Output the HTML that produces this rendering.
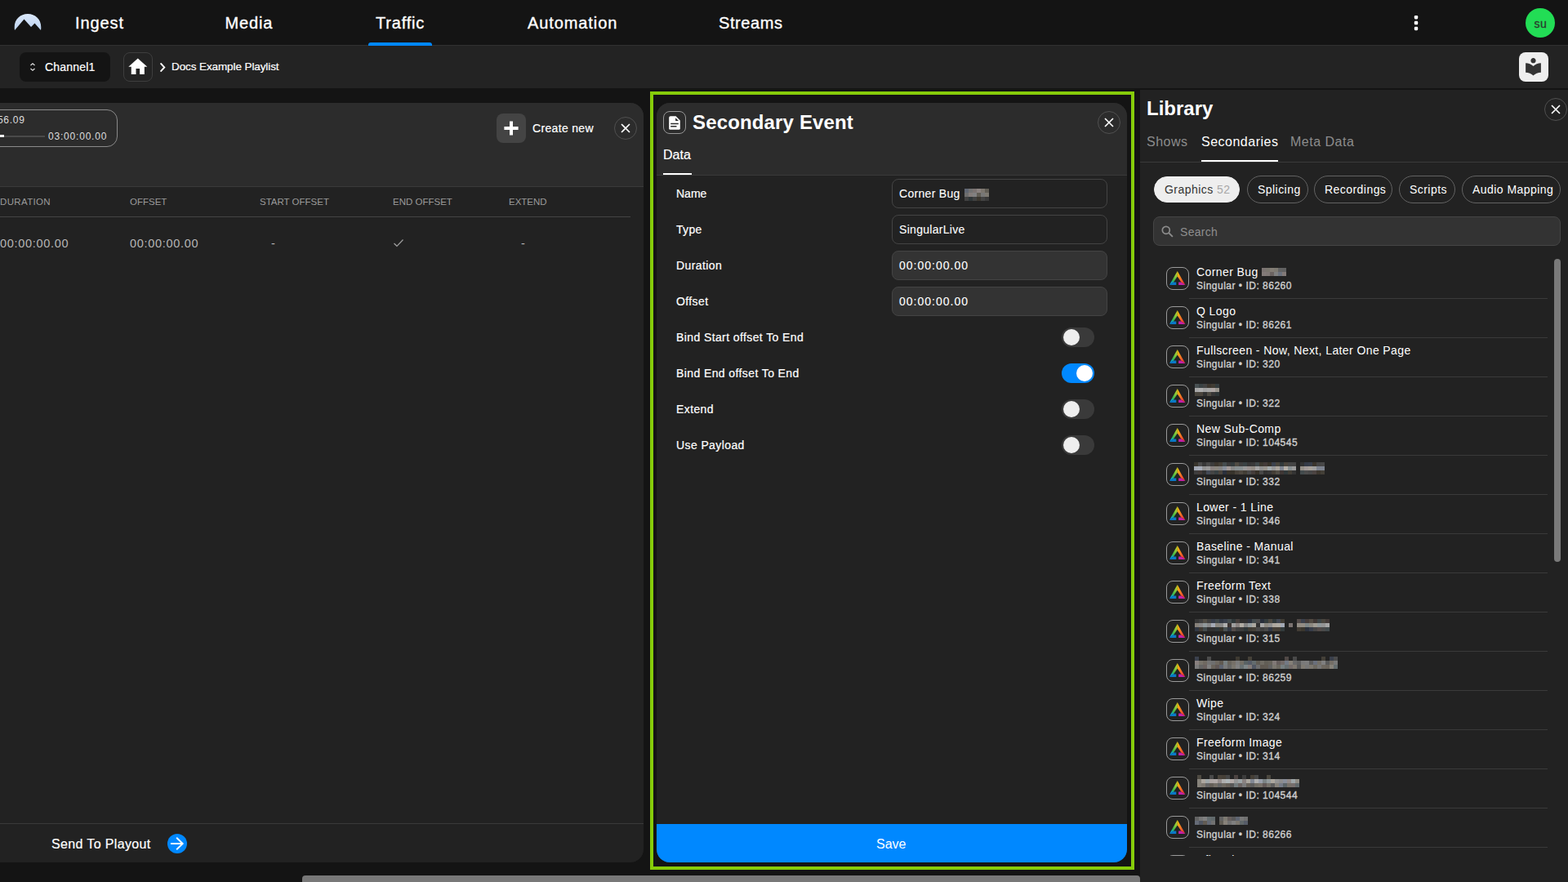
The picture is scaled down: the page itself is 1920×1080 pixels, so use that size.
<!DOCTYPE html>
<html lang="en">
<head>
<meta charset="utf-8">
<title>Docs Example Playlist</title>
<style>
*{box-sizing:border-box;margin:0;padding:0}
html,body{width:1920px;height:1080px;overflow:hidden;background:#141414}
body{font-family:"Liberation Sans",sans-serif;color:#fff;position:relative;font-size:14px}
.abs{position:absolute}
.t{position:absolute;white-space:nowrap;line-height:1}
/* top nav */
#nav{left:0;top:0;width:1920px;height:55px;background:#141414}
#navline{left:0;top:55px;width:1920px;height:1px;background:#313131}
.navi{font-size:20px;top:18px;color:#fff;-webkit-text-stroke:0.35px #fff}
#uline{left:451px;top:52px;width:78px;height:4px;background:#0088ff;border-radius:3px 3px 0 0}
#avatar{left:1868px;top:10px;width:36px;height:36px;border-radius:50%;background:#22dd55}
/* sub bar */
#sub{left:0;top:56px;width:1920px;height:52px;background:#232323}
#chan{left:24px;top:64px;width:111px;height:36px;border-radius:8px;background:#141414}
#home{left:151px;top:64px;width:36px;height:36px;border-radius:8px;border:1px solid #3e3e3e}
#book{left:1860px;top:64px;width:36px;height:36px;border-radius:8px;background:#eeeeee}
/* left panel */
#lp{left:-20px;top:126px;width:808px;height:930px;border-radius:16px;background:#222222;overflow:hidden}
#lphead{left:0;top:0;width:808px;height:102px;background:#2c2c2c}
.hl{position:absolute;height:1px;background:#3a3a3a}
.th{font-size:11.5px;color:#9a9a9a;top:241.7px}
.td{font-size:14.5px;letter-spacing:0.7px;color:#b5b5b5;top:291px}
#pill{left:-20px;top:134px;width:164px;height:46px;border:1px solid #8a8a8a;border-radius:13px}
#plus{left:608px;top:139px;width:36px;height:36px;border-radius:8px;background:#444444}
.xbtn{position:absolute;width:28px;height:28px;border-radius:50%;border:1px solid #505050}
/* secondary event */
#green{left:796px;top:112px;width:593px;height:953px;border:4px solid #86cc0a}
#se{left:804px;top:126px;width:576px;height:930px;border-radius:16px;background:#222222;overflow:hidden}
#sehead{left:0;top:0;width:576px;height:88px;background:#2c2c2c}
.lbl{letter-spacing:0.4px;font-size:14px;color:#fff;left:828px;-webkit-text-stroke:0.2px #fff}
.inp{position:absolute;left:1092px;width:264px;height:36px;border-radius:8px;border:1px solid #444444}
.inp.f{background:#333333}
.inp span{letter-spacing:0.3px;position:absolute;left:8px;top:10px;font-size:14px;line-height:1;white-space:nowrap;-webkit-text-stroke:0.1px #fff}
.tg{position:absolute;left:1300px;width:40px;height:24px;border-radius:12px;background:#3a3a3a}
.tg i{position:absolute;left:2px;top:2px;width:20px;height:20px;border-radius:50%;background:#eeeeee}
.tg.on{background:#0088ff}
.tg.on i{left:18px;background:#fff}
#save{left:804px;top:1009px;width:576px;height:47px;background:#0088ff;border-radius:0 0 16px 16px}
/* library */
#lib{left:1396px;top:110px;width:524px;height:970px;background:#222222}
.tab{font-size:16px;top:166px;letter-spacing:0.5px}
.chip{letter-spacing:0.45px;position:absolute;top:215px;height:34px;border-radius:17px;border:1px solid #626262;font-size:14px;line-height:32px;text-align:left;padding-left:12px;white-space:nowrap;color:#fff}
#search{left:1412px;top:265px;width:499px;height:36px;border-radius:8px;background:#333333;border:1px solid #454545}
#list{left:1396px;top:317px;width:512px;height:731px;overflow:hidden}
.it{position:absolute;left:0;width:512px;height:48px}
.it .ic{position:absolute;left:32px;top:10px;width:28px;height:28px;border-radius:8px;border:1px solid #9a9a9a}
.it .ic svg{position:absolute;left:3.3px;top:4.2px}
.it .a{letter-spacing:0.4px;position:absolute;left:69px;top:9px;font-size:14px;line-height:1;white-space:nowrap;color:#fff}
.it .b{letter-spacing:0.5px;position:absolute;left:69px;top:27px;font-size:12px;line-height:1;white-space:nowrap;color:#d0d0d0;-webkit-text-stroke:0.35px #d0d0d0}
.it .d{position:absolute;left:60px;top:48px;width:439px;height:1px;background:#3a3a3a}
.px{position:absolute;display:block}
#vsb{left:1903px;top:317px;width:8px;height:371px;border-radius:4px;background:#7a7a7a}
#hsb{left:370px;top:1072px;width:1026px;height:8px;border-radius:4px 4px 0 0;background:#787878}
</style>
</head>
<body>
<!-- NAV -->
<div id="nav" class="abs"></div>
<div id="navline" class="abs"></div>
<svg class="abs" style="left:17px;top:16px" width="34" height="22" viewBox="0 0 34 22"><defs><linearGradient id="lg" x1="0" y1="0" x2="0" y2="1"><stop offset="0" stop-color="#dbe8fb"/><stop offset="1" stop-color="#bcd3f0"/></linearGradient></defs><path d="M1 21 C-1 9 7 1 17 1 C27 1 35 9 33 21 L25.5 12.5 L21 17 L12.5 7.5 Z" fill="url(#lg)"/></svg>
<span class="t navi" style="left:92px;letter-spacing:0.9px">Ingest</span>
<span class="t navi" style="left:275.5px;letter-spacing:0.85px">Media</span>
<span class="t navi" style="left:460px;letter-spacing:0.8px">Traffic</span>
<span class="t navi" style="left:646px;letter-spacing:0.9px">Automation</span>
<span class="t navi" style="left:880px;letter-spacing:0.6px">Streams</span>
<div id="uline" class="abs"></div>
<svg class="abs" style="left:1730px;top:18px" width="8" height="20" viewBox="0 0 8 20"><rect x="1.8" y="1" width="4.4" height="4.4" rx="1.3" fill="#fff"/><rect x="1.8" y="7.87" width="4.4" height="4.4" rx="1.3" fill="#fff"/><rect x="1.8" y="14.75" width="4.4" height="4.4" rx="1.3" fill="#fff"/></svg>
<div id="avatar" class="abs"></div>
<span class="t" style="left:1878.5px;top:22px;font-size:14px;letter-spacing:0.5px;color:#2a3a2e;-webkit-text-stroke:0.3px #2a3a2e">su</span>

<!-- SUB BAR -->
<div id="sub" class="abs"></div>
<div id="chan" class="abs"></div>
<svg class="abs" style="left:35px;top:76px" width="10" height="12" viewBox="0 0 10 12"><path d="M2.5 4 L5 1.7 L7.5 4 M2.5 8 L5 10.3 L7.5 8" fill="none" stroke="#ddd" stroke-width="1.2"/></svg>
<span class="t" style="left:55px;top:75px;font-size:14px;letter-spacing:0.2px;-webkit-text-stroke:0.2px #fff">Channel1</span>
<div id="home" class="abs"></div>
<svg class="abs" style="left:155.2px;top:68.15px" width="27.6" height="27.6" viewBox="0 0 24 24"><path d="M10 20v-6h4v6h5v-8h3L12 3 2 12h3v8z" fill="#fff"/></svg>
<svg class="abs" style="left:195px;top:77px" width="8" height="11" viewBox="0 0 8 11"><path d="M1.6 0.4 L6.3 5.5 L1.6 10.6" fill="none" stroke="#fff" stroke-width="1.9" stroke-linejoin="miter"/></svg>
<span class="t" style="left:210px;top:75px;font-size:13.5px;letter-spacing:-0.1px;-webkit-text-stroke:0.2px #fff">Docs Example Playlist</span>
<div id="book" class="abs"></div>
<svg class="abs" style="left:1865px;top:68.9px" width="25" height="25" viewBox="0 0 24 24"><path d="M12 11.55C9.64 9.35 6.48 8 3 8v11c3.48 0 6.64 1.35 9 3.55 2.36-2.19 5.52-3.55 9-3.55V8c-3.48 0-6.64 1.35-9 3.55zM12 8c1.66 0 3-1.34 3-3s-1.34-3-3-3-3 1.34-3 3 1.34 3 3 3z" fill="#333"/></svg>

<!-- LEFT PANEL -->
<div id="lp" class="abs"><div id="lphead" class="abs"></div></div>
<div class="hl" style="left:0;top:228px;width:788px"></div>
<div class="hl" style="left:0;top:265px;width:772px;background:#444"></div>
<div class="hl" style="left:0;top:1008px;width:788px"></div>
<div id="pill" class="abs"></div>
<span class="t" style="left:-3px;top:141px;font-size:12px;letter-spacing:0.7px;color:#ddd">56.09</span>
<div class="abs" style="left:0;top:166px;width:55px;height:2px;background:#4a4a4a"></div>
<div class="abs" style="left:0;top:165px;width:5px;height:3px;background:#eee"></div>
<span class="t" style="left:59px;top:161px;font-size:12px;letter-spacing:0.8px;color:#ddd">03:00:00.00</span>
<div id="plus" class="abs"></div>
<svg class="abs" style="left:616.6px;top:147.5px" width="18" height="18" viewBox="0 0 18 18"><path d="M9 0.4 V17.6 M0.4 9 H17.6" stroke="#fff" stroke-width="4"/></svg>
<span class="t" style="left:652px;top:150px;font-size:14px;letter-spacing:0.33px;-webkit-text-stroke:0.2px #fff">Create new</span>
<div class="xbtn" style="left:752px;top:143px"></div>
<svg class="abs" style="left:760px;top:151px" width="12" height="12" viewBox="0 0 12 12"><path d="M1 1 L11 11 M11 1 L1 11" stroke="#fff" stroke-width="1.6"/></svg>
<span class="t th" style="left:0;letter-spacing:0.35px">DURATION</span>
<span class="t th" style="left:159px">OFFSET</span>
<span class="t th" style="left:318px">START OFFSET</span>
<span class="t th" style="left:481px">END OFFSET</span>
<span class="t th" style="left:623px">EXTEND</span>
<span class="t td" style="left:0">00:00:00.00</span>
<span class="t td" style="left:159px">00:00:00.00</span>
<span class="t td" style="left:332px">-</span>
<svg class="abs" style="left:481px;top:292px" width="14" height="11" viewBox="0 0 14 11"><path d="M1.5 6 L5 9.3 L12.5 1.5" fill="none" stroke="#a0a0a0" stroke-width="1.2"/></svg>
<span class="t td" style="left:638px">-</span>
<span class="t" style="left:63px;top:1026px;font-size:16px;letter-spacing:0.36px;-webkit-text-stroke:0.2px #fff">Send To Playout</span>
<div class="abs" style="left:205px;top:1021px;width:24px;height:24px;border-radius:50%;background:#0088ff"></div>
<svg class="abs" style="left:208px;top:1024px" width="18" height="18" viewBox="0 0 18 18"><path d="M1 9 H15.2 M8.2 1.8 L15.7 9 L8.2 16.2" fill="none" stroke="#fff" stroke-width="1.9"/></svg>

<!-- SECONDARY EVENT -->
<div id="green" class="abs"></div>
<div id="se" class="abs"><div id="sehead" class="abs"></div></div>
<div class="hl" style="left:804px;top:214px;width:576px"></div>
<div class="abs" style="left:812px;top:136px;width:28px;height:28px;border-radius:8px;border:1px solid #969696"></div>
<svg class="abs" style="left:819px;top:141.5px" width="14" height="17" viewBox="0 0 14 17"><path d="M2 0.3 H8.6 L13.8 5.5 V15.2 Q13.8 16.8 12.2 16.8 H1.8 Q0.2 16.8 0.2 15.2 V1.9 Q0.2 0.3 2 0.3 Z" fill="#fff"/><path d="M8.1 2.2 V6.1 H12 Z" fill="#2c2c2c"/><path d="M2.2 9.4 H11.8 M2.2 12.7 H9.5" stroke="#2c2c2c" stroke-width="1.5"/></svg>
<span class="t" style="left:848px;top:138px;font-size:24px;letter-spacing:0.15px;font-weight:bold">Secondary Event</span>
<div class="xbtn" style="left:1344px;top:136px"></div>
<svg class="abs" style="left:1352px;top:144px" width="12" height="12" viewBox="0 0 12 12"><path d="M1 1 L11 11 M11 1 L1 11" stroke="#fff" stroke-width="1.6"/></svg>
<span class="t" style="left:812px;top:182px;font-size:16px;-webkit-text-stroke:0.2px #fff">Data</span>
<div class="abs" style="left:812px;top:212px;width:35px;height:2px;background:#fff"></div>

<span class="t lbl" style="top:230px;letter-spacing:0">Name</span>
<span class="t lbl" style="top:274px;letter-spacing:0.3px">Type</span>
<span class="t lbl" style="top:318px">Duration</span>
<span class="t lbl" style="top:362px">Offset</span>
<span class="t lbl" style="top:406px">Bind Start offset To End</span>
<span class="t lbl" style="top:450px">Bind End offset To End</span>
<span class="t lbl" style="top:494px">Extend</span>
<span class="t lbl" style="top:538px">Use Payload</span>
<div class="inp" style="top:219px"><span>Corner Bug</span></div>
<!--INM--><svg class="px inm" style="left:1181px;top:231px" width="30" height="15" viewBox="0 0 30 15"><rect x="0" y="0" width="5" height="5" fill="#606672"/><rect x="0" y="5" width="5" height="5" fill="#6d6d6d"/><rect x="0" y="10" width="5" height="5" fill="#414141"/><rect x="5" y="0" width="5" height="5" fill="#727272"/><rect x="5" y="5" width="5" height="5" fill="#847c7a"/><rect x="5" y="10" width="5" height="5" fill="#2f3739"/><rect x="10" y="0" width="5" height="5" fill="#7c7472"/><rect x="10" y="5" width="5" height="5" fill="#818181"/><rect x="10" y="10" width="5" height="5" fill="#414141"/><rect x="15" y="0" width="5" height="5" fill="#8a8280"/><rect x="15" y="5" width="5" height="5" fill="#605c54"/><rect x="15" y="10" width="5" height="5" fill="#3b372f"/><rect x="20" y="0" width="5" height="5" fill="#7c766e"/><rect x="20" y="5" width="5" height="5" fill="#777777"/><rect x="20" y="10" width="5" height="5" fill="#434343"/><rect x="25" y="0" width="5" height="5" fill="#615d55"/><rect x="25" y="5" width="5" height="5" fill="#7d7971"/><rect x="25" y="10" width="5" height="5" fill="#393939"/></svg><!--/INM-->
<div class="inp" style="top:263px"><span>SingularLive</span></div>
<div class="inp f" style="top:307px"><span style="letter-spacing:1px">00:00:00.00</span></div>
<div class="inp f" style="top:351px"><span style="letter-spacing:1px">00:00:00.00</span></div>
<div class="tg" style="top:401px"><i></i></div>
<div class="tg on" style="top:445px"><i></i></div>
<div class="tg" style="top:489px"><i></i></div>
<div class="tg" style="top:533px"><i></i></div>
<div id="save" class="abs"></div>
<span class="t" style="left:1073px;top:1026px;font-size:16px">Save</span>

<!-- LIBRARY -->
<div id="lib" class="abs"></div>
<span class="t" style="left:1404px;top:121.3px;font-size:24px;font-weight:bold">Library</span>
<div class="xbtn" style="left:1891px;top:120px"></div>
<svg class="abs" style="left:1899px;top:128px" width="12" height="12" viewBox="0 0 12 12"><path d="M1 1 L11 11 M11 1 L1 11" stroke="#fff" stroke-width="1.6"/></svg>
<span class="t tab" style="left:1404px;color:#8c8c8c">Shows</span>
<span class="t tab" style="left:1471px">Secondaries</span>
<span class="t tab" style="left:1580px;color:#8c8c8c">Meta Data</span>
<div class="hl" style="left:1396px;top:198px;width:524px"></div>
<div class="abs" style="left:1471px;top:196px;width:94px;height:2px;background:#fff"></div>
<div class="chip" style="left:1413px;top:216px;height:32px;line-height:30px;width:105px;background:#eeeeee;border-color:#eeeeee;color:#333">Graphics <span style="color:#a8a8a8;-webkit-text-stroke:0">52</span></div>
<div class="chip" style="left:1527px;width:75px">Splicing</div>
<div class="chip" style="left:1609px;width:96px">Recordings</div>
<div class="chip" style="left:1713px;width:69px">Scripts</div>
<div class="chip" style="left:1790px;width:121px">Audio Mapping</div>
<div id="search" class="abs"></div>
<svg class="abs" style="left:1421.6px;top:275.6px" width="15" height="15" viewBox="0 0 15 15"><circle cx="5.8" cy="5.8" r="4.5" fill="none" stroke="#8c8c8c" stroke-width="1.7"/><path d="M9.1 9.1 L13.9 13.9" stroke="#8c8c8c" stroke-width="1.9"/></svg>
<span class="t" style="left:1445px;top:276.5px;font-size:14px;letter-spacing:0.3px;color:#8e8e8e">Search</span>
<div id="list" class="abs">
<!--ITEMS-->
<svg width="0" height="0" style="position:absolute"><defs><linearGradient id="gl" x1="0" y1="1" x2="0.35" y2="0"><stop offset="0" stop-color="#00a2e8"/><stop offset="0.2" stop-color="#00a2e8"/><stop offset="0.45" stop-color="#3cb64a"/><stop offset="1" stop-color="#b9d531"/></linearGradient><linearGradient id="gr" x1="0" y1="0" x2="0.35" y2="1"><stop offset="0" stop-color="#ffd400"/><stop offset="0.45" stop-color="#f7931e"/><stop offset="1" stop-color="#ef3b2d"/></linearGradient></defs></svg>
<div class="it" style="top:0px"><div class="ic"><svg width="19.4" height="17" viewBox="0 0 20 17.5"><path d="M10 0 L0 17.5 L5.2 14 L10 6.6 Z" fill="url(#gl)"/><path d="M10 0 L20 17.5 L14.8 14 L10 6.6 Z" fill="url(#gr)"/><path d="M0 17.5 H8.5 V14 H5.2 Z" fill="#0a78c8"/><path d="M20 17.5 H11.5 V14 H14.8 Z" fill="#c420a8"/></svg></div><span class="a">Corner Bug</span><svg class="px" style="left:149px;top:6px" width="30" height="15" viewBox="0 0 30 15"><rect x="0" y="5" width="5" height="5" fill="#7c7472"/><rect x="0" y="10" width="5" height="5" fill="#837b79"/><rect x="5" y="5" width="5" height="5" fill="#7b776f"/><rect x="5" y="10" width="5" height="5" fill="#807876"/><rect x="10" y="5" width="5" height="5" fill="#837d75"/><rect x="10" y="10" width="5" height="5" fill="#6b6361"/><rect x="15" y="5" width="5" height="5" fill="#7e7a72"/><rect x="15" y="10" width="5" height="5" fill="#808080"/><rect x="20" y="5" width="5" height="5" fill="#636363"/><rect x="20" y="10" width="5" height="5" fill="#6c727e"/><rect x="25" y="5" width="5" height="5" fill="#616161"/><rect x="25" y="10" width="5" height="5" fill="#827a78"/></svg><span class="b">Singular &bull; ID: 86260</span><div class="d"></div></div>
<div class="it" style="top:48px"><div class="ic"><svg width="19.4" height="17" viewBox="0 0 20 17.5"><path d="M10 0 L0 17.5 L5.2 14 L10 6.6 Z" fill="url(#gl)"/><path d="M10 0 L20 17.5 L14.8 14 L10 6.6 Z" fill="url(#gr)"/><path d="M0 17.5 H8.5 V14 H5.2 Z" fill="#0a78c8"/><path d="M20 17.5 H11.5 V14 H14.8 Z" fill="#c420a8"/></svg></div><span class="a">Q Logo</span><span class="b">Singular &bull; ID: 86261</span><div class="d"></div></div>
<div class="it" style="top:96px"><div class="ic"><svg width="19.4" height="17" viewBox="0 0 20 17.5"><path d="M10 0 L0 17.5 L5.2 14 L10 6.6 Z" fill="url(#gl)"/><path d="M10 0 L20 17.5 L14.8 14 L10 6.6 Z" fill="url(#gr)"/><path d="M0 17.5 H8.5 V14 H5.2 Z" fill="#0a78c8"/><path d="M20 17.5 H11.5 V14 H14.8 Z" fill="#c420a8"/></svg></div><span class="a">Fullscreen - Now, Next, Later One Page</span><span class="b">Singular &bull; ID: 320</span><div class="d"></div></div>
<div class="it" style="top:144px"><div class="ic"><svg width="19.4" height="17" viewBox="0 0 20 17.5"><path d="M10 0 L0 17.5 L5.2 14 L10 6.6 Z" fill="url(#gl)"/><path d="M10 0 L20 17.5 L14.8 14 L10 6.6 Z" fill="url(#gr)"/><path d="M0 17.5 H8.5 V14 H5.2 Z" fill="#0a78c8"/><path d="M20 17.5 H11.5 V14 H14.8 Z" fill="#c420a8"/></svg></div><svg class="px" style="left:67px;top:9px" width="30" height="15" viewBox="0 0 30 15"><rect x="0" y="0" width="5" height="5" fill="#485052"/><rect x="0" y="5" width="5" height="5" fill="#a8a8a8"/><rect x="0" y="10" width="5" height="5" fill="#49453d"/><rect x="5" y="0" width="5" height="5" fill="#3a4244"/><rect x="5" y="5" width="5" height="5" fill="#afafaf"/><rect x="5" y="10" width="5" height="5" fill="#4a443c"/><rect x="10" y="0" width="5" height="5" fill="#434343"/><rect x="10" y="5" width="5" height="5" fill="#a1a1a1"/><rect x="10" y="10" width="5" height="5" fill="#313131"/><rect x="15" y="0" width="5" height="5" fill="#3c362e"/><rect x="15" y="5" width="5" height="5" fill="#a6a6a6"/><rect x="15" y="10" width="5" height="5" fill="#4e4a42"/><rect x="20" y="0" width="5" height="5" fill="#403c34"/><rect x="20" y="5" width="5" height="5" fill="#ada5a3"/><rect x="20" y="10" width="5" height="5" fill="#363636"/><rect x="25" y="0" width="5" height="5" fill="#333b3d"/><rect x="25" y="5" width="5" height="5" fill="#98948c"/><rect x="25" y="10" width="5" height="5" fill="#2c3436"/></svg><span class="b">Singular &bull; ID: 322</span><div class="d"></div></div>
<div class="it" style="top:192px"><div class="ic"><svg width="19.4" height="17" viewBox="0 0 20 17.5"><path d="M10 0 L0 17.5 L5.2 14 L10 6.6 Z" fill="url(#gl)"/><path d="M10 0 L20 17.5 L14.8 14 L10 6.6 Z" fill="url(#gr)"/><path d="M0 17.5 H8.5 V14 H5.2 Z" fill="#0a78c8"/><path d="M20 17.5 H11.5 V14 H14.8 Z" fill="#c420a8"/></svg></div><span class="a">New Sub-Comp</span><span class="b">Singular &bull; ID: 104545</span><div class="d"></div></div>
<div class="it" style="top:240px"><div class="ic"><svg width="19.4" height="17" viewBox="0 0 20 17.5"><path d="M10 0 L0 17.5 L5.2 14 L10 6.6 Z" fill="url(#gl)"/><path d="M10 0 L20 17.5 L14.8 14 L10 6.6 Z" fill="url(#gr)"/><path d="M0 17.5 H8.5 V14 H5.2 Z" fill="#0a78c8"/><path d="M20 17.5 H11.5 V14 H14.8 Z" fill="#c420a8"/></svg></div><svg class="px" style="left:66px;top:9px" width="160" height="15" viewBox="0 0 160 15"><rect x="0" y="0" width="5" height="5" fill="#38342c"/><rect x="0" y="5" width="5" height="5" fill="#a1a7b3"/><rect x="0" y="10" width="5" height="5" fill="#3d3d3d"/><rect x="5" y="0" width="5" height="5" fill="#4a4a4a"/><rect x="5" y="5" width="5" height="5" fill="#a5abb7"/><rect x="5" y="10" width="5" height="5" fill="#423a38"/><rect x="10" y="0" width="5" height="5" fill="#373737"/><rect x="10" y="5" width="5" height="5" fill="#929292"/><rect x="10" y="10" width="5" height="5" fill="#323232"/><rect x="15" y="0" width="5" height="5" fill="#484848"/><rect x="15" y="5" width="5" height="5" fill="#999999"/><rect x="15" y="10" width="5" height="5" fill="#434955"/><rect x="20" y="0" width="5" height="5" fill="#3c3c3c"/><rect x="20" y="5" width="5" height="5" fill="#89817f"/><rect x="20" y="10" width="5" height="5" fill="#454545"/><rect x="25" y="0" width="5" height="5" fill="#3c362e"/><rect x="25" y="5" width="5" height="5" fill="#89857d"/><rect x="25" y="10" width="5" height="5" fill="#384042"/><rect x="30" y="0" width="5" height="5" fill="#423e36"/><rect x="30" y="5" width="5" height="5" fill="#848484"/><rect x="30" y="10" width="5" height="5" fill="#4a443c"/><rect x="35" y="0" width="5" height="5" fill="#444c4e"/><rect x="35" y="5" width="5" height="5" fill="#898f9b"/><rect x="35" y="10" width="5" height="5" fill="#2a303c"/><rect x="40" y="0" width="5" height="5" fill="#3a3a3a"/><rect x="40" y="5" width="5" height="5" fill="#a29a98"/><rect x="40" y="10" width="5" height="5" fill="#39332b"/><rect x="45" y="0" width="5" height="5" fill="#333b3d"/><rect x="45" y="5" width="5" height="5" fill="#868686"/><rect x="45" y="10" width="5" height="5" fill="#37332b"/><rect x="50" y="0" width="5" height="5" fill="#4f4b43"/><rect x="50" y="5" width="5" height="5" fill="#878f91"/><rect x="50" y="10" width="5" height="5" fill="#474139"/><rect x="55" y="0" width="5" height="5" fill="#3e3e3e"/><rect x="55" y="5" width="5" height="5" fill="#889092"/><rect x="55" y="10" width="5" height="5" fill="#4e4840"/><rect x="60" y="0" width="5" height="5" fill="#394143"/><rect x="60" y="5" width="5" height="5" fill="#989898"/><rect x="60" y="10" width="5" height="5" fill="#423e36"/><rect x="65" y="0" width="5" height="5" fill="#363636"/><rect x="65" y="5" width="5" height="5" fill="#99918f"/><rect x="65" y="10" width="5" height="5" fill="#494949"/><rect x="70" y="0" width="5" height="5" fill="#393939"/><rect x="70" y="5" width="5" height="5" fill="#938d85"/><rect x="70" y="10" width="5" height="5" fill="#443c3a"/><rect x="75" y="0" width="5" height="5" fill="#3f4749"/><rect x="75" y="5" width="5" height="5" fill="#a4a4a4"/><rect x="75" y="10" width="5" height="5" fill="#373129"/><rect x="80" y="0" width="5" height="5" fill="#3c3830"/><rect x="80" y="5" width="5" height="5" fill="#909090"/><rect x="80" y="10" width="5" height="5" fill="#484848"/><rect x="85" y="0" width="5" height="5" fill="#423a38"/><rect x="85" y="5" width="5" height="5" fill="#98948c"/><rect x="85" y="10" width="5" height="5" fill="#323232"/><rect x="90" y="0" width="5" height="5" fill="#38322a"/><rect x="90" y="5" width="5" height="5" fill="#a1a9ab"/><rect x="90" y="10" width="5" height="5" fill="#373737"/><rect x="95" y="0" width="5" height="5" fill="#3b414d"/><rect x="95" y="5" width="5" height="5" fill="#979797"/><rect x="95" y="10" width="5" height="5" fill="#443e36"/><rect x="100" y="0" width="5" height="5" fill="#48443c"/><rect x="100" y="5" width="5" height="5" fill="#aaa49c"/><rect x="100" y="10" width="5" height="5" fill="#514d45"/><rect x="105" y="0" width="5" height="5" fill="#31393b"/><rect x="105" y="5" width="5" height="5" fill="#818793"/><rect x="105" y="10" width="5" height="5" fill="#3f3735"/><rect x="110" y="0" width="5" height="5" fill="#49433b"/><rect x="110" y="5" width="5" height="5" fill="#b4aea6"/><rect x="110" y="10" width="5" height="5" fill="#31393b"/><rect x="115" y="0" width="5" height="5" fill="#444444"/><rect x="115" y="5" width="5" height="5" fill="#889092"/><rect x="115" y="10" width="5" height="5" fill="#423e36"/><rect x="120" y="0" width="5" height="5" fill="#434343"/><rect x="120" y="5" width="5" height="5" fill="#9a9a9a"/><rect x="120" y="10" width="5" height="5" fill="#333333"/><rect x="130" y="0" width="5" height="5" fill="#313131"/><rect x="130" y="5" width="5" height="5" fill="#969088"/><rect x="130" y="10" width="5" height="5" fill="#434b4d"/><rect x="135" y="0" width="5" height="5" fill="#343a46"/><rect x="135" y="5" width="5" height="5" fill="#a29a98"/><rect x="135" y="10" width="5" height="5" fill="#4c4c4c"/><rect x="140" y="0" width="5" height="5" fill="#373d49"/><rect x="140" y="5" width="5" height="5" fill="#a7a199"/><rect x="140" y="10" width="5" height="5" fill="#474747"/><rect x="145" y="0" width="5" height="5" fill="#3a342c"/><rect x="145" y="5" width="5" height="5" fill="#9e9e9e"/><rect x="145" y="10" width="5" height="5" fill="#4c4442"/><rect x="150" y="0" width="5" height="5" fill="#434343"/><rect x="150" y="5" width="5" height="5" fill="#7c828e"/><rect x="150" y="10" width="5" height="5" fill="#3c362e"/><rect x="155" y="0" width="5" height="5" fill="#474747"/><rect x="155" y="5" width="5" height="5" fill="#7c828e"/><rect x="155" y="10" width="5" height="5" fill="#433f37"/></svg><span class="b">Singular &bull; ID: 332</span><div class="d"></div></div>
<div class="it" style="top:288px"><div class="ic"><svg width="19.4" height="17" viewBox="0 0 20 17.5"><path d="M10 0 L0 17.5 L5.2 14 L10 6.6 Z" fill="url(#gl)"/><path d="M10 0 L20 17.5 L14.8 14 L10 6.6 Z" fill="url(#gr)"/><path d="M0 17.5 H8.5 V14 H5.2 Z" fill="#0a78c8"/><path d="M20 17.5 H11.5 V14 H14.8 Z" fill="#c420a8"/></svg></div><span class="a">Lower - 1 Line</span><span class="b">Singular &bull; ID: 346</span><div class="d"></div></div>
<div class="it" style="top:336px"><div class="ic"><svg width="19.4" height="17" viewBox="0 0 20 17.5"><path d="M10 0 L0 17.5 L5.2 14 L10 6.6 Z" fill="url(#gl)"/><path d="M10 0 L20 17.5 L14.8 14 L10 6.6 Z" fill="url(#gr)"/><path d="M0 17.5 H8.5 V14 H5.2 Z" fill="#0a78c8"/><path d="M20 17.5 H11.5 V14 H14.8 Z" fill="#c420a8"/></svg></div><span class="a">Baseline - Manual</span><span class="b">Singular &bull; ID: 341</span><div class="d"></div></div>
<div class="it" style="top:384px"><div class="ic"><svg width="19.4" height="17" viewBox="0 0 20 17.5"><path d="M10 0 L0 17.5 L5.2 14 L10 6.6 Z" fill="url(#gl)"/><path d="M10 0 L20 17.5 L14.8 14 L10 6.6 Z" fill="url(#gr)"/><path d="M0 17.5 H8.5 V14 H5.2 Z" fill="#0a78c8"/><path d="M20 17.5 H11.5 V14 H14.8 Z" fill="#c420a8"/></svg></div><span class="a">Freeform Text</span><span class="b">Singular &bull; ID: 338</span><div class="d"></div></div>
<div class="it" style="top:432px"><div class="ic"><svg width="19.4" height="17" viewBox="0 0 20 17.5"><path d="M10 0 L0 17.5 L5.2 14 L10 6.6 Z" fill="url(#gl)"/><path d="M10 0 L20 17.5 L14.8 14 L10 6.6 Z" fill="url(#gr)"/><path d="M0 17.5 H8.5 V14 H5.2 Z" fill="#0a78c8"/><path d="M20 17.5 H11.5 V14 H14.8 Z" fill="#c420a8"/></svg></div><svg class="px" style="left:67px;top:9px" width="165" height="15" viewBox="0 0 165 15"><rect x="0" y="0" width="5" height="5" fill="#373737"/><rect x="0" y="5" width="5" height="5" fill="#88827a"/><rect x="0" y="10" width="5" height="5" fill="#313743"/><rect x="5" y="0" width="5" height="5" fill="#404040"/><rect x="5" y="5" width="5" height="5" fill="#888888"/><rect x="5" y="10" width="5" height="5" fill="#413b33"/><rect x="10" y="0" width="5" height="5" fill="#524e46"/><rect x="10" y="5" width="5" height="5" fill="#91999b"/><rect x="10" y="10" width="5" height="5" fill="#434b4d"/><rect x="15" y="0" width="5" height="5" fill="#404040"/><rect x="15" y="5" width="5" height="5" fill="#888888"/><rect x="15" y="10" width="5" height="5" fill="#313131"/><rect x="20" y="0" width="5" height="5" fill="#373d49"/><rect x="20" y="5" width="5" height="5" fill="#a4aab6"/><rect x="20" y="10" width="5" height="5" fill="#313131"/><rect x="25" y="0" width="5" height="5" fill="#3f4749"/><rect x="25" y="5" width="5" height="5" fill="#8a867e"/><rect x="25" y="10" width="5" height="5" fill="#2e3638"/><rect x="30" y="0" width="5" height="5" fill="#313743"/><rect x="30" y="5" width="5" height="5" fill="#888888"/><rect x="30" y="10" width="5" height="5" fill="#38342c"/><rect x="35" y="0" width="5" height="5" fill="#393f4b"/><rect x="35" y="5" width="5" height="5" fill="#afafaf"/><rect x="35" y="10" width="5" height="5" fill="#485052"/><rect x="40" y="0" width="5" height="5" fill="#434b4d"/><rect x="40" y="5" width="5" height="5" fill="#3c3432"/><rect x="40" y="10" width="5" height="5" fill="#323844"/><rect x="45" y="0" width="5" height="5" fill="#2e3638"/><rect x="45" y="5" width="5" height="5" fill="#9e9e9e"/><rect x="45" y="10" width="5" height="5" fill="#534b49"/><rect x="50" y="0" width="5" height="5" fill="#453d3b"/><rect x="50" y="5" width="5" height="5" fill="#89817f"/><rect x="50" y="10" width="5" height="5" fill="#3f3f3f"/><rect x="55" y="0" width="5" height="5" fill="#303030"/><rect x="55" y="5" width="5" height="5" fill="#b0aca4"/><rect x="55" y="10" width="5" height="5" fill="#3c3c3c"/><rect x="60" y="0" width="5" height="5" fill="#303030"/><rect x="60" y="5" width="5" height="5" fill="#848484"/><rect x="60" y="10" width="5" height="5" fill="#2e3638"/><rect x="65" y="0" width="5" height="5" fill="#2b313d"/><rect x="65" y="5" width="5" height="5" fill="#969ea0"/><rect x="65" y="10" width="5" height="5" fill="#403c34"/><rect x="70" y="0" width="5" height="5" fill="#434b4d"/><rect x="70" y="5" width="5" height="5" fill="#aba79f"/><rect x="70" y="10" width="5" height="5" fill="#444038"/><rect x="75" y="0" width="5" height="5" fill="#4a4a4a"/><rect x="75" y="5" width="5" height="5" fill="#323232"/><rect x="75" y="10" width="5" height="5" fill="#484848"/><rect x="80" y="0" width="5" height="5" fill="#282e3a"/><rect x="80" y="5" width="5" height="5" fill="#a6a6a6"/><rect x="80" y="10" width="5" height="5" fill="#3f3f3f"/><rect x="85" y="0" width="5" height="5" fill="#333b3d"/><rect x="85" y="5" width="5" height="5" fill="#8d8981"/><rect x="85" y="10" width="5" height="5" fill="#484848"/><rect x="90" y="0" width="5" height="5" fill="#4b473f"/><rect x="90" y="5" width="5" height="5" fill="#909090"/><rect x="90" y="10" width="5" height="5" fill="#333945"/><rect x="95" y="0" width="5" height="5" fill="#30383a"/><rect x="95" y="5" width="5" height="5" fill="#ada79f"/><rect x="95" y="10" width="5" height="5" fill="#464038"/><rect x="100" y="0" width="5" height="5" fill="#404652"/><rect x="100" y="5" width="5" height="5" fill="#b0aca4"/><rect x="100" y="10" width="5" height="5" fill="#453f37"/><rect x="105" y="0" width="5" height="5" fill="#403c34"/><rect x="105" y="5" width="5" height="5" fill="#a2a8b4"/><rect x="105" y="10" width="5" height="5" fill="#323a3c"/><rect x="115" y="5" width="5" height="5" fill="#7b7371"/><rect x="125" y="0" width="5" height="5" fill="#514947"/><rect x="125" y="5" width="5" height="5" fill="#928c84"/><rect x="125" y="10" width="5" height="5" fill="#423c34"/><rect x="130" y="0" width="5" height="5" fill="#3a404c"/><rect x="130" y="5" width="5" height="5" fill="#938d85"/><rect x="130" y="10" width="5" height="5" fill="#3a362e"/><rect x="135" y="0" width="5" height="5" fill="#433b39"/><rect x="135" y="5" width="5" height="5" fill="#7e8688"/><rect x="135" y="10" width="5" height="5" fill="#2a303c"/><rect x="140" y="0" width="5" height="5" fill="#504a42"/><rect x="140" y="5" width="5" height="5" fill="#8d8981"/><rect x="140" y="10" width="5" height="5" fill="#373d49"/><rect x="145" y="0" width="5" height="5" fill="#3e3634"/><rect x="145" y="5" width="5" height="5" fill="#a09c94"/><rect x="145" y="10" width="5" height="5" fill="#444444"/><rect x="150" y="0" width="5" height="5" fill="#3b4345"/><rect x="150" y="5" width="5" height="5" fill="#90989a"/><rect x="150" y="10" width="5" height="5" fill="#524a48"/><rect x="155" y="0" width="5" height="5" fill="#49453d"/><rect x="155" y="5" width="5" height="5" fill="#949494"/><rect x="155" y="10" width="5" height="5" fill="#4a4a4a"/><rect x="160" y="0" width="5" height="5" fill="#403836"/><rect x="160" y="5" width="5" height="5" fill="#a6a6a6"/><rect x="160" y="10" width="5" height="5" fill="#41494b"/></svg><span class="b">Singular &bull; ID: 315</span><div class="d"></div></div>
<div class="it" style="top:480px"><div class="ic"><svg width="19.4" height="17" viewBox="0 0 20 17.5"><path d="M10 0 L0 17.5 L5.2 14 L10 6.6 Z" fill="url(#gl)"/><path d="M10 0 L20 17.5 L14.8 14 L10 6.6 Z" fill="url(#gr)"/><path d="M0 17.5 H8.5 V14 H5.2 Z" fill="#0a78c8"/><path d="M20 17.5 H11.5 V14 H14.8 Z" fill="#c420a8"/></svg></div><svg class="px" style="left:67px;top:7px" width="175" height="15" viewBox="0 0 175 15"><rect x="0" y="0" width="5" height="5" fill="#3b414d"/><rect x="0" y="5" width="5" height="5" fill="#89817f"/><rect x="0" y="10" width="5" height="5" fill="#7c7c7c"/><rect x="5" y="5" width="5" height="5" fill="#77736b"/><rect x="5" y="10" width="5" height="5" fill="#646464"/><rect x="10" y="5" width="5" height="5" fill="#6f6961"/><rect x="10" y="10" width="5" height="5" fill="#69615f"/><rect x="15" y="0" width="5" height="5" fill="#4c4c4c"/><rect x="15" y="5" width="5" height="5" fill="#747474"/><rect x="15" y="10" width="5" height="5" fill="#808080"/><rect x="20" y="5" width="5" height="5" fill="#6f6f6f"/><rect x="20" y="10" width="5" height="5" fill="#6a645c"/><rect x="25" y="5" width="5" height="5" fill="#6e6860"/><rect x="25" y="10" width="5" height="5" fill="#605856"/><rect x="30" y="5" width="5" height="5" fill="#605a52"/><rect x="30" y="10" width="5" height="5" fill="#5e6470"/><rect x="35" y="5" width="5" height="5" fill="#767e80"/><rect x="35" y="10" width="5" height="5" fill="#797979"/><rect x="40" y="5" width="5" height="5" fill="#68645c"/><rect x="40" y="10" width="5" height="5" fill="#666666"/><rect x="45" y="5" width="5" height="5" fill="#767068"/><rect x="45" y="10" width="5" height="5" fill="#7a766e"/><rect x="50" y="0" width="5" height="5" fill="#3e3a32"/><rect x="50" y="5" width="5" height="5" fill="#7b7b7b"/><rect x="50" y="10" width="5" height="5" fill="#818181"/><rect x="55" y="5" width="5" height="5" fill="#736f67"/><rect x="55" y="10" width="5" height="5" fill="#687072"/><rect x="60" y="5" width="5" height="5" fill="#5a6264"/><rect x="60" y="10" width="5" height="5" fill="#7d8587"/><rect x="65" y="0" width="5" height="5" fill="#454139"/><rect x="65" y="5" width="5" height="5" fill="#555b67"/><rect x="65" y="10" width="5" height="5" fill="#827a78"/><rect x="70" y="5" width="5" height="5" fill="#646c6e"/><rect x="70" y="10" width="5" height="5" fill="#515763"/><rect x="75" y="5" width="5" height="5" fill="#605c54"/><rect x="75" y="10" width="5" height="5" fill="#6d6d6d"/><rect x="80" y="5" width="5" height="5" fill="#6f6b63"/><rect x="80" y="10" width="5" height="5" fill="#5f5951"/><rect x="85" y="5" width="5" height="5" fill="#625e56"/><rect x="85" y="10" width="5" height="5" fill="#605a52"/><rect x="90" y="5" width="5" height="5" fill="#66625a"/><rect x="90" y="10" width="5" height="5" fill="#616161"/><rect x="95" y="5" width="5" height="5" fill="#817977"/><rect x="95" y="10" width="5" height="5" fill="#7a766e"/><rect x="100" y="5" width="5" height="5" fill="#655d5b"/><rect x="100" y="10" width="5" height="5" fill="#6c6860"/><rect x="105" y="5" width="5" height="5" fill="#726a68"/><rect x="105" y="10" width="5" height="5" fill="#777f81"/><rect x="110" y="0" width="5" height="5" fill="#504846"/><rect x="110" y="5" width="5" height="5" fill="#737985"/><rect x="110" y="10" width="5" height="5" fill="#676f71"/><rect x="115" y="5" width="5" height="5" fill="#857f77"/><rect x="115" y="10" width="5" height="5" fill="#736b69"/><rect x="120" y="0" width="5" height="5" fill="#494949"/><rect x="120" y="5" width="5" height="5" fill="#696969"/><rect x="120" y="10" width="5" height="5" fill="#7d776f"/><rect x="125" y="5" width="5" height="5" fill="#5f5f5f"/><rect x="125" y="10" width="5" height="5" fill="#585858"/><rect x="130" y="5" width="5" height="5" fill="#7a7a7a"/><rect x="130" y="10" width="5" height="5" fill="#7f7b73"/><rect x="135" y="5" width="5" height="5" fill="#7c7c7c"/><rect x="135" y="10" width="5" height="5" fill="#777777"/><rect x="140" y="5" width="5" height="5" fill="#5c5c5c"/><rect x="140" y="10" width="5" height="5" fill="#7b776f"/><rect x="145" y="5" width="5" height="5" fill="#696f7b"/><rect x="145" y="10" width="5" height="5" fill="#6d6961"/><rect x="150" y="5" width="5" height="5" fill="#736f67"/><rect x="150" y="10" width="5" height="5" fill="#767676"/><rect x="155" y="0" width="5" height="5" fill="#444038"/><rect x="155" y="5" width="5" height="5" fill="#7f7f7f"/><rect x="155" y="10" width="5" height="5" fill="#6e6860"/><rect x="160" y="5" width="5" height="5" fill="#595959"/><rect x="160" y="10" width="5" height="5" fill="#6a645c"/><rect x="165" y="0" width="5" height="5" fill="#393f4b"/><rect x="165" y="5" width="5" height="5" fill="#746e66"/><rect x="165" y="10" width="5" height="5" fill="#858179"/><rect x="170" y="0" width="5" height="5" fill="#4a4a4a"/><rect x="170" y="5" width="5" height="5" fill="#787878"/><rect x="170" y="10" width="5" height="5" fill="#646c6e"/></svg><span class="b">Singular &bull; ID: 86259</span><div class="d"></div></div>
<div class="it" style="top:528px"><div class="ic"><svg width="19.4" height="17" viewBox="0 0 20 17.5"><path d="M10 0 L0 17.5 L5.2 14 L10 6.6 Z" fill="url(#gl)"/><path d="M10 0 L20 17.5 L14.8 14 L10 6.6 Z" fill="url(#gr)"/><path d="M0 17.5 H8.5 V14 H5.2 Z" fill="#0a78c8"/><path d="M20 17.5 H11.5 V14 H14.8 Z" fill="#c420a8"/></svg></div><span class="a">Wipe</span><span class="b">Singular &bull; ID: 324</span><div class="d"></div></div>
<div class="it" style="top:576px"><div class="ic"><svg width="19.4" height="17" viewBox="0 0 20 17.5"><path d="M10 0 L0 17.5 L5.2 14 L10 6.6 Z" fill="url(#gl)"/><path d="M10 0 L20 17.5 L14.8 14 L10 6.6 Z" fill="url(#gr)"/><path d="M0 17.5 H8.5 V14 H5.2 Z" fill="#0a78c8"/><path d="M20 17.5 H11.5 V14 H14.8 Z" fill="#c420a8"/></svg></div><span class="a">Freeform Image</span><span class="b">Singular &bull; ID: 314</span><div class="d"></div></div>
<div class="it" style="top:624px"><div class="ic"><svg width="19.4" height="17" viewBox="0 0 20 17.5"><path d="M10 0 L0 17.5 L5.2 14 L10 6.6 Z" fill="url(#gl)"/><path d="M10 0 L20 17.5 L14.8 14 L10 6.6 Z" fill="url(#gr)"/><path d="M0 17.5 H8.5 V14 H5.2 Z" fill="#0a78c8"/><path d="M20 17.5 H11.5 V14 H14.8 Z" fill="#c420a8"/></svg></div><svg class="px" style="left:70px;top:8px" width="125" height="15" viewBox="0 0 125 15"><rect x="0" y="0" width="5" height="5" fill="#4e4a42"/><rect x="0" y="5" width="5" height="5" fill="#87837b"/><rect x="0" y="10" width="5" height="5" fill="#86827a"/><rect x="5" y="5" width="5" height="5" fill="#ada79f"/><rect x="5" y="10" width="5" height="5" fill="#807a72"/><rect x="10" y="5" width="5" height="5" fill="#9ea6a8"/><rect x="10" y="10" width="5" height="5" fill="#656565"/><rect x="15" y="0" width="5" height="5" fill="#494949"/><rect x="15" y="5" width="5" height="5" fill="#ada5a3"/><rect x="15" y="10" width="5" height="5" fill="#666058"/><rect x="20" y="5" width="5" height="5" fill="#b0a8a6"/><rect x="20" y="10" width="5" height="5" fill="#746e66"/><rect x="25" y="0" width="5" height="5" fill="#48423a"/><rect x="25" y="5" width="5" height="5" fill="#958d8b"/><rect x="25" y="10" width="5" height="5" fill="#646464"/><rect x="30" y="0" width="5" height="5" fill="#453f37"/><rect x="30" y="5" width="5" height="5" fill="#aeaeae"/><rect x="30" y="10" width="5" height="5" fill="#6e6a62"/><rect x="35" y="0" width="5" height="5" fill="#454545"/><rect x="35" y="5" width="5" height="5" fill="#aeb6b8"/><rect x="35" y="10" width="5" height="5" fill="#666058"/><rect x="40" y="5" width="5" height="5" fill="#b3aba9"/><rect x="40" y="10" width="5" height="5" fill="#595959"/><rect x="45" y="0" width="5" height="5" fill="#4b4341"/><rect x="45" y="5" width="5" height="5" fill="#979797"/><rect x="45" y="10" width="5" height="5" fill="#747c7e"/><rect x="50" y="5" width="5" height="5" fill="#9ca4a6"/><rect x="50" y="10" width="5" height="5" fill="#6c6462"/><rect x="55" y="0" width="5" height="5" fill="#3b3b3b"/><rect x="55" y="5" width="5" height="5" fill="#8a8280"/><rect x="55" y="10" width="5" height="5" fill="#7b7b7b"/><rect x="60" y="5" width="5" height="5" fill="#aaa69e"/><rect x="60" y="10" width="5" height="5" fill="#676159"/><rect x="65" y="0" width="5" height="5" fill="#443e36"/><rect x="65" y="5" width="5" height="5" fill="#828894"/><rect x="65" y="10" width="5" height="5" fill="#5e5e5e"/><rect x="70" y="0" width="5" height="5" fill="#464646"/><rect x="70" y="5" width="5" height="5" fill="#b0b0b0"/><rect x="70" y="10" width="5" height="5" fill="#726e66"/><rect x="75" y="5" width="5" height="5" fill="#989eaa"/><rect x="75" y="10" width="5" height="5" fill="#79736b"/><rect x="80" y="5" width="5" height="5" fill="#7c8486"/><rect x="80" y="10" width="5" height="5" fill="#625a58"/><rect x="85" y="0" width="5" height="5" fill="#4b473f"/><rect x="85" y="5" width="5" height="5" fill="#939b9d"/><rect x="85" y="10" width="5" height="5" fill="#757169"/><rect x="90" y="5" width="5" height="5" fill="#aca69e"/><rect x="90" y="10" width="5" height="5" fill="#5e5e5e"/><rect x="95" y="5" width="5" height="5" fill="#949494"/><rect x="95" y="10" width="5" height="5" fill="#86827a"/><rect x="100" y="5" width="5" height="5" fill="#8c8c8c"/><rect x="100" y="10" width="5" height="5" fill="#757b87"/><rect x="105" y="5" width="5" height="5" fill="#888e9a"/><rect x="105" y="10" width="5" height="5" fill="#5b6365"/><rect x="110" y="5" width="5" height="5" fill="#928a88"/><rect x="110" y="10" width="5" height="5" fill="#777169"/><rect x="115" y="5" width="5" height="5" fill="#9ea6a8"/><rect x="115" y="10" width="5" height="5" fill="#776f6d"/><rect x="120" y="5" width="5" height="5" fill="#918d85"/><rect x="120" y="10" width="5" height="5" fill="#61696b"/></svg><span class="b">Singular &bull; ID: 104544</span><div class="d"></div></div>
<div class="it" style="top:672px"><div class="ic"><svg width="19.4" height="17" viewBox="0 0 20 17.5"><path d="M10 0 L0 17.5 L5.2 14 L10 6.6 Z" fill="url(#gl)"/><path d="M10 0 L20 17.5 L14.8 14 L10 6.6 Z" fill="url(#gr)"/><path d="M0 17.5 H8.5 V14 H5.2 Z" fill="#0a78c8"/><path d="M20 17.5 H11.5 V14 H14.8 Z" fill="#c420a8"/></svg></div><svg class="px" style="left:67px;top:6px" width="65" height="15" viewBox="0 0 65 15"><rect x="0" y="5" width="5" height="5" fill="#636363"/><rect x="0" y="10" width="5" height="5" fill="#656b77"/><rect x="5" y="5" width="5" height="5" fill="#767676"/><rect x="5" y="10" width="5" height="5" fill="#505662"/><rect x="10" y="5" width="5" height="5" fill="#808080"/><rect x="10" y="10" width="5" height="5" fill="#615b53"/><rect x="15" y="5" width="5" height="5" fill="#656d6f"/><rect x="15" y="10" width="5" height="5" fill="#636975"/><rect x="20" y="5" width="5" height="5" fill="#61696b"/><rect x="20" y="10" width="5" height="5" fill="#717171"/><rect x="30" y="5" width="5" height="5" fill="#636363"/><rect x="30" y="10" width="5" height="5" fill="#625e56"/><rect x="35" y="5" width="5" height="5" fill="#7e7a72"/><rect x="35" y="10" width="5" height="5" fill="#878179"/><rect x="40" y="5" width="5" height="5" fill="#675f5d"/><rect x="40" y="10" width="5" height="5" fill="#717171"/><rect x="45" y="5" width="5" height="5" fill="#595959"/><rect x="45" y="10" width="5" height="5" fill="#7f7f7f"/><rect x="50" y="5" width="5" height="5" fill="#5f6571"/><rect x="50" y="10" width="5" height="5" fill="#7a766e"/><rect x="55" y="5" width="5" height="5" fill="#787878"/><rect x="55" y="10" width="5" height="5" fill="#60686a"/><rect x="60" y="5" width="5" height="5" fill="#707070"/><rect x="60" y="10" width="5" height="5" fill="#565c68"/></svg><span class="b">Singular &bull; ID: 86266</span><div class="d"></div></div>
<div class="it" style="top:720px"><div class="ic"><svg width="19.4" height="17" viewBox="0 0 20 17.5"><path d="M10 0 L0 17.5 L5.2 14 L10 6.6 Z" fill="url(#gl)"/><path d="M10 0 L20 17.5 L14.8 14 L10 6.6 Z" fill="url(#gr)"/><path d="M0 17.5 H8.5 V14 H5.2 Z" fill="#0a78c8"/><path d="M20 17.5 H11.5 V14 H14.8 Z" fill="#c420a8"/></svg></div><span class="a">Nfl 1 Line</span><span class="b">Singular &bull; ID: 86267</span><div class="d"></div></div>
<!--/ITEMS-->
</div>
<div id="vsb" class="abs"></div>
<div id="hsb" class="abs"></div>
</body>
</html>
